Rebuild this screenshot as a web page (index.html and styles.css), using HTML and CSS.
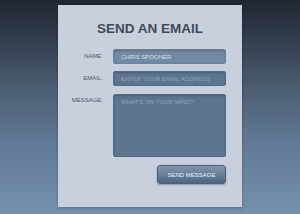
FILE: index.html
```html
<!DOCTYPE html>
<html>
<head>
    <title>Send an Email</title>
    <link rel="stylesheet" href="styles.css">
</head>
<body>
    <div class="card">
        <h1>SEND AN EMAIL</h1>
        <form class="contact">
            <label for="name">NAME:</label>
            <input id="name" class="field name" type="text" value="CHRIS SPOONER">

            <label for="email">EMAIL:</label>
            <input id="email" class="field" type="text" placeholder="ENTER YOUR EMAIL ADDRESS">

            <label for="message">MESSAGE:</label>
            <textarea id="message" class="field message" placeholder="WHAT'S ON YOUR MIND?"></textarea>

            <button type="button" class="send">SEND MESSAGE</button>
        </form>
    </div>
</body>
</html>
```

FILE: styles.css
```css
html, body { height: 100%; }
body {
    margin: 0;
    font-family: "Liberation Sans", Arial, sans-serif;
    background: linear-gradient(to bottom, #202631 0%, #2c3544 12%, #4a5b6f 40%, #607893 65%, #7591ad 100%);
    overflow: hidden;
}
.card {
    width: 184px;
    height: 202px;
    margin: 5px auto 0;
    padding-top: 16px;
    box-sizing: border-box;
    background: #c9d0dd;
    box-shadow: 0 1px 3px rgba(0,0,0,0.25);
}
h1 {
    margin: 0;
    font-size: 13.5px;
    line-height: 16px;
    text-align: center;
    color: #3f4a5a;
    font-weight: bold;
}
.contact {
    display: grid;
    grid-template-columns: 1fr 113px;
    column-gap: 10px;
    row-gap: 7px;
    padding: 12px 16px 0 0;
    align-items: start;
}
.contact label {
    text-align: right;
    font-size: 6px;
    line-height: 15px;
    color: #4b5668;
}
.field {
    box-sizing: border-box;
    width: 113px;
    height: 15px;
    margin: 0;
    padding: 0 7px;
    border: 1px solid #556b84;
    border-radius: 2px;
    background: #5e758f;
    box-shadow: inset 0 1px 2px rgba(0,0,0,0.2);
    font-family: inherit;
    font-size: 6px;
    line-height: 13px;
    color: #d8e1ea;
    outline: none;
}
.field::placeholder { color: #8fa3b9; }
.name {
    background: #7189a4;
    border-color: #6a819c;
}
.message {
    height: 63px;
    margin-top: 1px;
    padding-top: 1px;
    resize: none;
    display: block;
}
.send {
    grid-column: 2;
    justify-self: end;
    width: 69px;
    height: 19px;
    margin-top: 1px;
    padding: 0;
    border: 1px solid #4a6078;
    border-radius: 3px;
    background: linear-gradient(to bottom, #8096ae, #4e6781);
    box-shadow: 0 1px 2px rgba(0,0,0,0.3);
    font-family: inherit;
    font-size: 6px;
    color: #eef2f6;
}
```
